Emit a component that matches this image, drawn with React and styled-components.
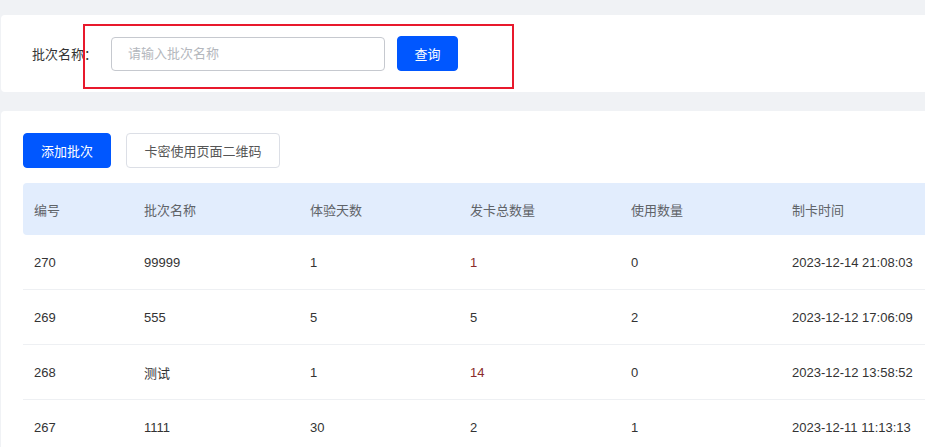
import React from "react";
import styled, { createGlobalStyle } from "styled-components";

const GlobalStyle = createGlobalStyle`
  html, body {
    margin: 0;
    padding: 0;
    background: #f0f2f5;
    overflow: hidden;
  }
  body {
    font-family: "Liberation Sans", "Noto Sans CJK SC", sans-serif;
    font-size: 13px;
    color: #333;
  }
`;

const Page = styled.div`
  width: 1100px;
  padding: 15px 0 0 1px;
  display: flex;
  flex-direction: column;
  gap: 19px;
`;

const Card = styled.div`
  position: relative;
  background: #fff;
  border-radius: 4px;
  padding: ${(p) => p.$padding || "0"};
`;

const SearchForm = styled.div`
  height: 77px;
  display: flex;
  align-items: center;
  padding-left: 31px;
  box-sizing: border-box;
`;

const Label = styled.label`
  width: 79px;
  font-size: 13px;
  color: #333;
`;

const Input = styled.input`
  width: 274px;
  height: 34px;
  box-sizing: border-box;
  border: 1px solid #c6c9cf;
  border-radius: 4px;
  padding: 0 16px;
  font-family: inherit;
  font-size: 13px;
  outline: none;
  &::placeholder {
    color: #b4b7bd;
  }
`;

const Button = styled.button`
  height: 35px;
  box-sizing: border-box;
  width: ${(p) => p.$width};
  padding: 0;
  border-radius: 4px;
  font-family: inherit;
  font-size: 13px;
  cursor: pointer;
  border: 1px solid ${(p) => (p.$primary ? "#0057ff" : "#dcdfe6")};
  background: ${(p) => (p.$primary ? "#0057ff" : "#fff")};
  color: ${(p) => (p.$primary ? "#fff" : "#555")};
`;

const SearchButton = styled(Button)`
  margin-left: 12px;
`;

const Highlight = styled.div`
  position: absolute;
  left: 82px;
  top: 9px;
  width: 431px;
  height: 65px;
  box-sizing: border-box;
  border: 2px solid #e8192c;
  pointer-events: none;
`;

const Toolbar = styled.div`
  display: flex;
  gap: 15px;
  margin-bottom: 15px;
`;

const Row = styled.div`
  display: grid;
  grid-template-columns: 110px 166px 160px 161px 161px 1fr;
  align-items: center;
  height: ${(p) => (p.$head ? "52px" : "55px")};
  background: ${(p) => (p.$head ? "#e2edfd" : "#fff")};
  border-radius: ${(p) => (p.$head ? "4px 0 0 4px" : "0")};
  border-bottom: ${(p) => (p.$head ? "none" : "1px solid #eef0f3")};
  box-sizing: border-box;
  color: ${(p) => (p.$head ? "#5f6368" : "#333")};
`;

const Cell = styled.div`
  padding-left: 11px;
  white-space: nowrap;
  color: ${(p) => (p.$accent ? "#8a2b2b" : "inherit")};
`;

const rows = [
  { id: 270, name: "99999", days: 1, total: 1, used: 0, time: "2023-12-14 21:08:03" },
  { id: 269, name: "555", days: 5, total: 5, used: 2, time: "2023-12-12 17:06:09" },
  { id: 268, name: "测试", days: 1, total: 14, used: 0, time: "2023-12-12 13:58:52" },
  { id: 267, name: "1111", days: 30, total: 2, used: 1, time: "2023-12-11 11:13:13" },
];

const heads = ["编号", "批次名称", "体验天数", "发卡总数量", "使用数量", "制卡时间"];

const App = () => {
  return (
    <Page>
      <GlobalStyle />
      <Card>
        <SearchForm>
          <Label>批次名称：</Label>
          <Input placeholder="请输入批次名称" />
          <SearchButton $primary $width="61px">
            查询
          </SearchButton>
        </SearchForm>
        <Highlight />
      </Card>
      <Card $padding="22px 0 0 22px">
        <Toolbar>
          <Button $primary $width="88px">添加批次</Button>
          <Button $width="154px">卡密使用页面二维码</Button>
        </Toolbar>
        <Row $head>
          {heads.map((h) => (
            <Cell key={h}>{h}</Cell>
          ))}
        </Row>
        {rows.map((r) => (
          <Row key={r.id}>
            <Cell>{r.id}</Cell>
            <Cell>{r.name}</Cell>
            <Cell>{r.days}</Cell>
            <Cell $accent={r.total === 1 || r.total === 14}>{r.total}</Cell>
            <Cell>{r.used}</Cell>
            <Cell>{r.time}</Cell>
          </Row>
        ))}
      </Card>
    </Page>
  );
};

export default App;
